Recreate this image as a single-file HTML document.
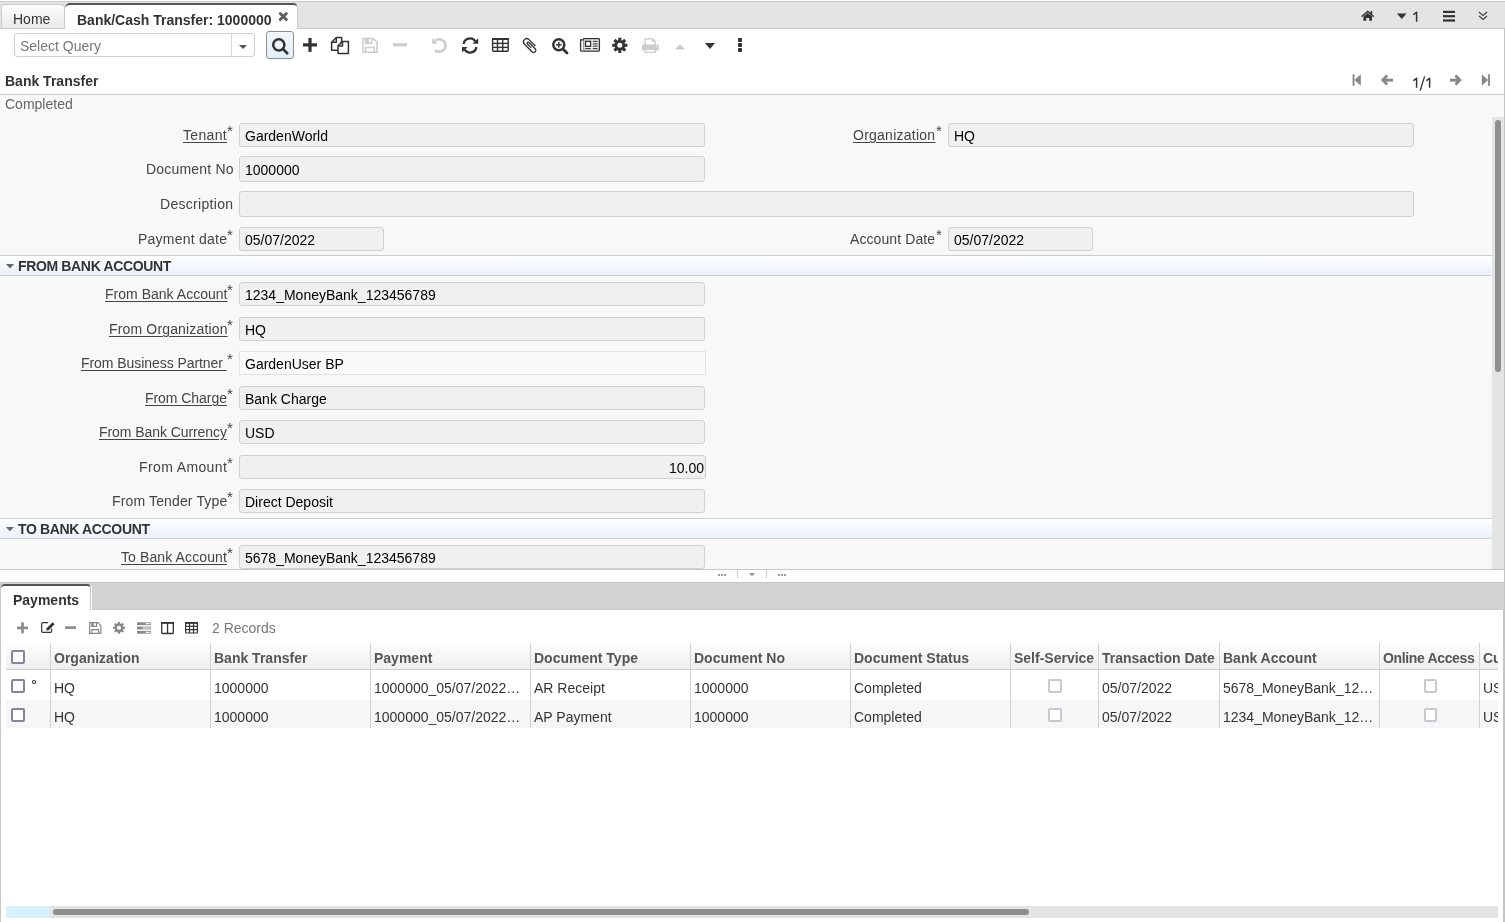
<!DOCTYPE html>
<html><head><meta charset="utf-8">
<style>
*{box-sizing:border-box;}
html,body{margin:0;padding:0;}
body{width:1505px;height:922px;overflow:hidden;position:relative;background:#fff;font-family:"Liberation Sans",sans-serif;font-size:14px;color:#333;}
.a{position:absolute;}
svg{position:absolute;overflow:visible;}
.t{position:absolute;white-space:nowrap;line-height:1;will-change:transform;}
/* tab bar */
#tabbar{left:0;top:1px;width:1505px;height:28px;background:#e4e4e4;border-top:1px solid #ccc;border-bottom:1px solid #ccc;}
#homeTab{left:1px;top:4px;width:64px;height:24px;border:1px solid #ccc;border-bottom:none;border-radius:4px 4px 0 0;background:linear-gradient(#fdfdfd,#eaeaea);}
#actTab{left:65px;top:3px;width:233px;height:26px;background:#fff;border-top:2px solid #555;border-right:1px solid #d0d0d0;border-radius:5px 5px 0 0;}
/* combobox */
#query{left:14px;top:33px;width:241px;height:24px;border:1px solid #cfcfcf;border-radius:3px;background:#fff;}
#query .div{left:216px;top:0;width:1px;height:22px;background:#d8d8d8;}
#searchBtn{left:266px;top:31px;width:28px;height:28px;border:1px solid #8b9196;border-radius:3px;background:linear-gradient(#f2f8fc,#e2eef7);}
.field{position:absolute;height:24px;border:1px solid #d0d0d0;border-radius:3px;background:#f0f0f0;}
.field span{position:absolute;left:6px;top:5px;font-size:14px;color:#000;line-height:1;white-space:nowrap;}
.lbl{position:absolute;text-align:right;font-size:14px;color:#444;line-height:1;white-space:nowrap;}
.t u{text-decoration:underline;text-underline-offset:2.3px;}
.ast{position:absolute;font-size:12px;color:#444;line-height:1;}
.bp{background:#fafafa;border-color:#e2e2e2;border-radius:0;}
.sect{position:absolute;left:0;width:1492px;height:21px;border-top:1px solid #cdcdcd;border-bottom:1px solid #cdcdcd;background:linear-gradient(#ffffff,#e9f1fb);}
</style></head>
<body>
<!-- TAB BAR -->
<div id="tabbar" class="a"></div>
<div id="homeTab" class="a"></div>
<div class="t" style="left:13px;top:12px;font-size:14px;color:#333;">Home</div>
<div id="actTab" class="a"></div>
<div class="t" style="left:77px;top:12.5px;font-size:14px;font-weight:bold;color:#333;">Bank/Cash Transfer: 1000000</div>


<!-- close x -->
<svg class="a" style="left:0;top:0" width="1505" height="922">
  <g stroke="#606060" stroke-width="3" stroke-linecap="round">
    <line x1="280.3" y1="13.5" x2="286.3" y2="19.5"/><line x1="286.3" y1="13.5" x2="280.3" y2="19.5"/>
  </g>
</svg>
<!-- right tabbar icons -->
<svg class="a" style="left:0;top:0" width="1505" height="922">
  <!-- home -->
  <path d="M1363.4,20.8 V16.5 L1367.7,12.9 L1372,16.5 V20.8 H1369.2 V18.1 H1366.3 V20.8 Z" fill="#333"/>
  <path d="M1362.1,16.3 L1367.7,11.5 L1373.4,16.3" stroke="#333" stroke-width="1.5" fill="none" stroke-linecap="round"/>
  <rect x="1370.5" y="11" width="1.7" height="3.4" fill="#333"/>
  <!-- dropdown triangle -->
  <path d="M1396.9,13.4 L1406.6,13.4 L1401.75,19 Z" fill="#333"/>
  <!-- hamburger -->
  <rect x="1443" y="10.8" width="12" height="2.2" fill="#333"/>
  <rect x="1443" y="15.1" width="12" height="2.2" fill="#333"/>
  <rect x="1443" y="19.4" width="12" height="2.2" fill="#333"/>
  <!-- double chevron -->
  <path d="M1479,12 L1483,15.6 L1487,12 M1479,15.8 L1483,19.4 L1487,15.8" stroke="#333" stroke-width="1.1" fill="none"/>
</svg>
<svg class="a" style="left:0;top:0" width="1505" height="922"><path d="M1413.3,14.6 Q1415.6,13.6 1416.6,12.3 V21.8" stroke="#333" stroke-width="1.5" fill="none" stroke-linejoin="round"/></svg>


<!-- TOOLBAR -->
<div id="query" class="a"><div class="a div"></div></div>
<div class="t" style="left:20px;top:38.5px;font-size:14px;color:#777;">Select Query</div>
<div id="searchBtn" class="a"></div>
<svg class="a" style="left:0;top:0" width="1505" height="922">
  <!-- combo arrow -->
  <path d="M239,45 L247,45 L243,49 Z" fill="#555"/>
  <!-- search -->
  <circle cx="278.8" cy="44.8" r="5.6" stroke="#333" stroke-width="2.5" fill="none"/>
  <line x1="283" y1="49" x2="287.2" y2="53.2" stroke="#333" stroke-width="2.7" stroke-linecap="round"/>
  <!-- plus -->
  <rect x="303" y="43.3" width="14" height="3.2" fill="#333"/>
  <rect x="308.4" y="37.9" width="3.2" height="14" fill="#333"/>
  <!-- copy -->
  <g stroke="#333" stroke-width="1.5" fill="#fff" stroke-linejoin="round">
    <path d="M331.6,42.2 L336.3,37.4 H341.6 V50.3 H331.6 Z"/>
    <path d="M331.6,42.2 H336.3 V37.4" fill="none"/>
    <path d="M338,45.9 L342.5,41.4 H348.4 V53.4 H338 Z"/>
    <path d="M338,45.9 H342.5 V41.4" fill="none"/>
  </g>
  <!-- save disabled -->
  <g stroke="#ccc" stroke-width="1.5" fill="none">
    <path d="M363,38.6 H373.4 L377.1,42.4 V52.2 H363 Z"/>
    <path d="M365.6,52.2 V47.5 H374.3 V52.2"/>
    <path d="M365.6,38.6 V43.3 H371.7 V38.6"/>
  </g>
  <rect x="365.6" y="38.6" width="3.4" height="4.7" fill="#ccc"/>
  <!-- minus disabled -->
  <rect x="393" y="43.2" width="14" height="3.4" rx="0.5" fill="#ccc"/>
  <!-- undo disabled -->
  <path d="M435,50.2 A6.3,6.3 0 1 0 435.2,40.6" stroke="#ccc" stroke-width="2.6" fill="none"/>
  <path d="M432.2,38.2 L432.2,43.8 L437.8,43.8 Z" fill="#ccc"/>
  <!-- refresh -->
  <g stroke="#333" stroke-width="2.3" fill="none">
    <path d="M463.6,44 A6.4,6.4 0 0 1 475.3,41.4"/>
    <path d="M476.4,47 A6.4,6.4 0 0 1 464.7,49.6"/>
  </g>
  <path d="M478.2,38.2 L478.2,43.7 L472.6,43.7 Z" fill="#333"/>
  <path d="M462,52.6 L462,47 L467.6,47 Z" fill="#333"/>
  <!-- table -->
  <g fill="none" stroke="#333" stroke-width="1.4">
    <rect x="492.6" y="38.7" width="15.6" height="12.5" rx="1"/>
    <line x1="497.5" y1="39" x2="497.5" y2="51"/>
    <line x1="502.7" y1="39" x2="502.7" y2="51"/>
    <line x1="493" y1="43.4" x2="508" y2="43.4"/>
    <line x1="493" y1="47.4" x2="508" y2="47.4"/>
  </g>
  <rect x="492" y="38" width="16.8" height="2" fill="#333"/>
  <!-- paperclip -->
  <g transform="translate(530.4,45.6) rotate(45)">
    <path d="M3.8,-3.2 H-5.2 A3.2,3.2 0 0 0 -5.2,3.2 H5.6 A2.2,2.2 0 0 0 5.6,-1.2 H-3.2 A1.1,1.1 0 0 0 -3.2,1 H2.2" stroke="#333" stroke-width="1.3" fill="none"/>
  </g>
  <!-- zoom in -->
  <circle cx="558.8" cy="44.8" r="5.5" stroke="#333" stroke-width="2.5" fill="none"/>
  <line x1="563.2" y1="49.2" x2="567" y2="53" stroke="#333" stroke-width="2.8" stroke-linecap="round"/>
  <rect x="556" y="44.1" width="5.6" height="1.5" fill="#333"/>
  <rect x="558.05" y="42.1" width="1.5" height="5.5" fill="#333"/>
  <!-- newspaper -->
  <rect x="583.5" y="38.6" width="15.9" height="12.5" rx="0.8" fill="#eee" stroke="#333" stroke-width="1.3"/>
  <path d="M583.5,39.8 H580.6 V50.4 Q580.6,51.1 581.6,51.1 H583.5" fill="#fff" stroke="#333" stroke-width="1.3"/>
  <rect x="585.6" y="41.3" width="5" height="5" fill="#fff" stroke="#333" stroke-width="1.3"/>
  <g stroke="#333" stroke-width="1.1">
    <line x1="592.8" y1="41.4" x2="597.6" y2="41.4"/>
    <line x1="592.8" y1="43.9" x2="597.6" y2="43.9"/>
    <line x1="592.8" y1="46.2" x2="597.6" y2="46.2"/>
    <line x1="585.2" y1="48.6" x2="590.9" y2="48.6"/>
    <line x1="592.8" y1="48.6" x2="597.6" y2="48.6"/>
  </g>
  <!-- gear -->
  <g transform="translate(619.8,45.3)" fill="#333">
    <g id="teeth">
      <rect x="-1.5" y="-7.6" width="3" height="15.2"/>
      <rect x="-1.5" y="-7.6" width="3" height="15.2" transform="rotate(45)"/>
      <rect x="-1.5" y="-7.6" width="3" height="15.2" transform="rotate(90)"/>
      <rect x="-1.5" y="-7.6" width="3" height="15.2" transform="rotate(135)"/>
    </g>
    <circle r="5.4"/>
    <circle r="2.5" fill="#fff"/>
  </g>
  <!-- print disabled -->
  <path d="M645.1,45.6 V38.8 H652.6 L655.2,41.4 V45.6" stroke="#ccc" stroke-width="1.3" fill="none"/>
  <path d="M652.2,38.2 V41.8 H655.8 Z" fill="#ccc"/>
  <path d="M643.3,44.6 H657.5 Q658.8,44.6 658.8,45.9 V50.6 H641.9 V45.9 Q641.9,44.6 643.3,44.6 Z" fill="#ccc"/>
  <rect x="645.1" y="49.2" width="10.1" height="3.1" fill="#fff" stroke="#ccc" stroke-width="1.3"/>
  <circle cx="656.5" cy="46.4" r="0.75" fill="#fff"/>
  <!-- up disabled -->
  <path d="M675,49.6 L685,49.6 L680,44 Z" fill="#ccc"/>
  <!-- down -->
  <path d="M704.9,43 L715,43 L710,49 Z" fill="#333"/>
  <!-- dots -->
  <rect x="738" y="38" width="4" height="4" rx="0.8" fill="#333"/>
  <rect x="738" y="43" width="4" height="4" rx="0.8" fill="#333"/>
  <rect x="738" y="48" width="4" height="4" rx="0.8" fill="#333"/>
</svg>

<div class="t" style="left:4.5px;top:73.73px;font-size:14px;color:#333;font-weight:bold;">Bank Transfer</div>
<svg class="a" style="left:0;top:0" width="1505" height="922">
 <g fill="#888">
  <rect x="1352.6" y="74.3" width="1.9" height="11.5"/>
  <path d="M1354.5,80 L1360.8,74.3 V85.8 Z"/>
  <g stroke="#888" stroke-width="2.8" fill="none" stroke-linejoin="miter"><path d="M1387.2,75.6 L1382.8,80.1 L1387.2,84.6"/><path d="M1455.5,75.6 L1459.9,80.1 L1455.5,84.6"/></g>
  <rect x="1383" y="78.7" width="10" height="2.9"/>
  <rect x="1450" y="78.7" width="10" height="2.9"/>
  <rect x="1488.1" y="74.3" width="1.9" height="11.5"/>
  <path d="M1488.1,80 L1481.8,74.3 V85.8 Z"/>
 </g>
 <rect x="0" y="94" width="1505" height="1" fill="#cdcdcd"/>
</svg><svg class="a" style="left:0;top:0" width="1505" height="922"><g stroke="#333" stroke-width="1.5" fill="none" stroke-linejoin="round"><path d="M1413.3,80.6 Q1415.6,79.6 1416.6,78.3 V87.8"/><path d="M1426.3,80.6 Q1428.6,79.6 1429.6,78.3 V87.8"/><path d="M1424.6,76.4 L1420.2,90.6" stroke-width="1.3"/></g></svg>

<!-- FORM -->
<div class="a" style="left:0;top:95px;width:1504px;height:474px;background:#f8f8f8;"></div>
<div class="t" style="left:5px;top:96.73px;font-size:14px;color:#666;font-weight:normal;">Completed</div>
<div class="t" style="right:1277.67px;top:128.13px;font-size:14px;color:#444;font-weight:normal;letter-spacing:0.33px;"><u>Tenant</u></div>
<div class="t" style="left:227.3px;top:123.30px;font-size:15px;color:#444;">*</div>
<div class="field " style="left:239px;top:123px;width:466px;height:24px;"></div>
<div class="t" style="left:244.5px;top:129.03px;font-size:14px;color:#000;font-weight:normal;">GardenWorld</div>
<div class="t" style="right:569.25px;top:128.13px;font-size:14px;color:#444;font-weight:normal;letter-spacing:0.25px;"><u>Organization</u></div>
<div class="t" style="left:935.8px;top:123.30px;font-size:15px;color:#444;">*</div>
<div class="field " style="left:948px;top:123px;width:466px;height:24px;"></div>
<div class="t" style="left:953.5px;top:129.03px;font-size:14px;color:#000;font-weight:normal;">HQ</div>
<div class="t" style="right:1271.81px;top:161.73px;font-size:14px;color:#444;font-weight:normal;letter-spacing:0.19px;">Document No</div>
<div class="field " style="left:239px;top:156px;width:466px;height:26px;"></div>
<div class="t" style="left:244.5px;top:163.03px;font-size:14px;color:#000;font-weight:normal;">1000000</div>
<div class="t" style="right:1271.7px;top:196.73px;font-size:14px;color:#444;font-weight:normal;letter-spacing:0.3px;">Description</div>
<div class="field " style="left:239px;top:191px;width:1175px;height:26px;"></div>
<div class="t" style="right:1277.77px;top:231.63px;font-size:14px;color:#444;font-weight:normal;letter-spacing:0.23px;">Payment date</div>
<div class="t" style="left:227.3px;top:226.80px;font-size:15px;color:#444;">*</div>
<div class="field " style="left:239px;top:227px;width:145px;height:24px;"></div>
<div class="t" style="left:244.5px;top:233.03px;font-size:14px;color:#000;font-weight:normal;">05/07/2022</div>
<div class="t" style="right:569.41px;top:231.63px;font-size:14px;color:#444;font-weight:normal;letter-spacing:0.09px;">Account Date</div>
<div class="t" style="left:935.8px;top:226.80px;font-size:15px;color:#444;">*</div>
<div class="field " style="left:948px;top:227px;width:145px;height:24px;"></div>
<div class="t" style="left:953.5px;top:233.03px;font-size:14px;color:#000;font-weight:normal;">05/07/2022</div>
<div class="sect" style="top:255px;height:21px;"></div>
<div class="sect" style="top:518px;height:21px;"></div>
<svg class="a" style="left:0;top:0" width="1505" height="922"><path d="M6,264 L14,264 L10,268.6 Z" fill="#666"/><path d="M5.8,527 L14,527 L9.9,531.3 Z" fill="#666"/></svg>
<div class="t" style="left:18.3px;top:259.13px;font-size:14px;color:#333;font-weight:bold;letter-spacing:-0.35px;">FROM BANK ACCOUNT</div>
<div class="t" style="left:18px;top:521.73px;font-size:14px;color:#333;font-weight:bold;letter-spacing:-0.35px;">TO BANK ACCOUNT</div>
<div class="t" style="right:1277.98px;top:287.13px;font-size:14px;color:#444;font-weight:normal;letter-spacing:0.02px;"><u>From Bank Account</u></div>
<div class="t" style="left:227.3px;top:282.30px;font-size:15px;color:#444;">*</div>
<div class="field " style="left:239px;top:282px;width:466px;height:24px;"></div>
<div class="t" style="left:244.5px;top:288.03px;font-size:14px;color:#000;font-weight:normal;">1234_MoneyBank_123456789</div>
<div class="t" style="right:1277.84px;top:322.13px;font-size:14px;color:#444;font-weight:normal;letter-spacing:0.16px;"><u>From Organization</u></div>
<div class="t" style="left:227.3px;top:317.30px;font-size:15px;color:#444;">*</div>
<div class="field " style="left:239px;top:317px;width:466px;height:24px;"></div>
<div class="t" style="left:244.5px;top:323.03px;font-size:14px;color:#000;font-weight:normal;">HQ</div>
<div class="t" style="right:1278.06px;top:356.13px;font-size:14px;color:#444;font-weight:normal;letter-spacing:-0.06px;"><u>From Business Partner&nbsp;</u></div>
<div class="t" style="left:227.3px;top:351.30px;font-size:15px;color:#444;">*</div>
<div class="field bp" style="left:239px;top:351px;width:467px;height:24px;"></div>
<div class="t" style="left:244.5px;top:357.03px;font-size:14px;color:#000;font-weight:normal;">GardenUser BP</div>
<div class="t" style="right:1278.05px;top:391.13px;font-size:14px;color:#444;font-weight:normal;letter-spacing:-0.05px;"><u>From Charge</u></div>
<div class="t" style="left:227.3px;top:386.30px;font-size:15px;color:#444;">*</div>
<div class="field " style="left:239px;top:386px;width:466px;height:24px;"></div>
<div class="t" style="left:244.5px;top:392.03px;font-size:14px;color:#000;font-weight:normal;">Bank Charge</div>
<div class="t" style="right:1278.07px;top:425.13px;font-size:14px;color:#444;font-weight:normal;letter-spacing:-0.07px;"><u>From Bank Currency</u></div>
<div class="t" style="left:227.3px;top:420.30px;font-size:15px;color:#444;">*</div>
<div class="field " style="left:239px;top:420px;width:466px;height:24px;"></div>
<div class="t" style="left:244.5px;top:426.03px;font-size:14px;color:#000;font-weight:normal;">USD</div>
<div class="t" style="right:1277.62px;top:460.13px;font-size:14px;color:#444;font-weight:normal;letter-spacing:0.38px;">From Amount</div>
<div class="t" style="left:227.3px;top:455.30px;font-size:15px;color:#444;">*</div>
<div class="field " style="left:239px;top:455px;width:467px;height:24px;"></div>
<div class="t" style="right:800.5px;top:461.03px;font-size:14px;color:#000;font-weight:normal;">10.00</div>
<div class="t" style="right:1277.8600000000001px;top:494.13px;font-size:14px;color:#444;font-weight:normal;letter-spacing:0.14px;">From Tender Type</div>
<div class="t" style="left:227.3px;top:489.30px;font-size:15px;color:#444;">*</div>
<div class="field " style="left:239px;top:489px;width:466px;height:24px;"></div>
<div class="t" style="left:244.5px;top:495.03px;font-size:14px;color:#000;font-weight:normal;">Direct Deposit</div>
<div class="t" style="right:1277.8899999999999px;top:550.13px;font-size:14px;color:#444;font-weight:normal;letter-spacing:0.11px;"><u>To Bank Account</u></div>
<div class="t" style="left:227.3px;top:545.30px;font-size:15px;color:#444;">*</div>
<div class="field " style="left:239px;top:545px;width:466px;height:24px;"></div>
<div class="t" style="left:244.5px;top:551.03px;font-size:14px;color:#000;font-weight:normal;">5678_MoneyBank_123456789</div>
<div class="a" style="left:1492px;top:117px;width:12px;height:452px;background:#e4e4e4;"></div>
<div class="a" style="left:1495px;top:120px;width:6px;height:252px;border-radius:3px;background:#8e8e8e;"></div>
<div class="a" style="left:0;top:569px;width:1504px;height:14px;background:#fff;border-top:1px solid #c6c6c6;border-bottom:1px solid #c6c6c6;"></div>
<svg class="a" style="left:0;top:0" width="1505" height="922">
 <g fill="#999">
  <rect x="718" y="574" width="2" height="2"/><rect x="721" y="574" width="2" height="2"/><rect x="724" y="574" width="2" height="2"/>
  <rect x="778" y="574" width="2" height="2"/><rect x="781" y="574" width="2" height="2"/><rect x="784" y="574" width="2" height="2"/>
  <path d="M749,573 L755,573 L752,576.5 Z"/>
 </g>
 <rect x="737" y="570" width="1" height="8" fill="#c6c6c6"/>
 <rect x="766" y="570" width="1" height="8" fill="#c6c6c6"/>
</svg>
<div class="a" style="left:0;top:583px;width:1504px;height:27px;background:#d3d3d3;"></div>
<div class="a" style="left:0;top:583px;width:1px;height:339px;background:#c8c8c8;"></div>
<div class="a" style="left:1px;top:584px;width:90px;height:26px;background:#fff;border-top:2px solid #555;border-right:1px solid #c8c8c8;border-radius:4px 4px 0 0;"></div>
<div class="a" style="left:91px;top:586px;width:1px;height:24px;background:#fff;"></div>
<div class="t" style="left:12.8px;top:592.83px;font-size:14px;color:#333;font-weight:bold;">Payments</div>
<svg class="a" style="left:0;top:0" width="1505" height="922">
 <!-- plus -->
 <rect x="17" y="626.6" width="11" height="2.6" fill="#888"/>
 <rect x="21.2" y="622.3" width="2.6" height="11" fill="#888"/>
 <!-- edit -->
 <path d="M48.2,622.6 H42.8 Q41.7,622.6 41.7,623.7 V631.2 Q41.7,632.3 42.8,632.3 H50.4 Q51.5,632.3 51.5,631.2 V628.6" stroke="#333" stroke-width="1.2" fill="none"/>
 <path d="M46.2,630.6 L46.6,628.2 L52.6,622.2 L54.6,624.2 L48.6,630.2 Z" fill="#333"/>
 <!-- minus -->
 <rect x="65" y="626.3" width="11" height="2.6" fill="#888"/>
 <!-- save -->
 <g stroke="#888" stroke-width="1.2" fill="none">
  <path d="M89.6,622.6 H98 L100.8,625.4 V633.4 H89.6 Z"/>
  <path d="M91.8,633.4 V629.6 H98.6 V633.4"/>
  <path d="M91.8,622.6 V626.4 H96.6 V622.6"/>
 </g>
 <rect x="91.8" y="622.6" width="2" height="3.8" fill="#888"/>
 <!-- gear -->
 <g transform="translate(119,627.8)" fill="#888">
  <rect x="-1.2" y="-5.9" width="2.4" height="11.8"/>
  <rect x="-1.2" y="-5.9" width="2.4" height="11.8" transform="rotate(45)"/>
  <rect x="-1.2" y="-5.9" width="2.4" height="11.8" transform="rotate(90)"/>
  <rect x="-1.2" y="-5.9" width="2.4" height="11.8" transform="rotate(135)"/>
  <circle r="4.3"/>
  <circle r="2" fill="#fff"/>
 </g>
 <!-- list -->
 <g fill="#888">
  <rect x="137" y="622.3" width="14" height="2.8"/>
  <rect x="137" y="626.6" width="14" height="2.8"/>
  <rect x="137" y="630.9" width="14" height="2.8"/>
 </g>
 <g fill="#fff">
  <rect x="145.5" y="623.2" width="5" height="1"/>
  <rect x="142.5" y="627.5" width="8" height="1"/>
  <rect x="145.5" y="631.8" width="5" height="1"/>
 </g>
 <!-- columns -->
 <rect x="161.7" y="622.7" width="11.6" height="10.8" rx="0.8" stroke="#333" stroke-width="1.3" fill="none"/>
 <rect x="161" y="622" width="13" height="1.8" fill="#333"/>
 <rect x="166.9" y="622.5" width="1.3" height="11" fill="#333"/>
 <!-- table -->
 <g fill="none" stroke="#333" stroke-width="1.2">
  <rect x="185.6" y="622.6" width="11.8" height="10.4" rx="0.8"/>
  <line x1="189.5" y1="623" x2="189.5" y2="633"/>
  <line x1="193.5" y1="623" x2="193.5" y2="633"/>
  <line x1="186" y1="626.3" x2="197" y2="626.3"/>
  <line x1="186" y1="629.6" x2="197" y2="629.6"/>
 </g>
 <rect x="185" y="622" width="13" height="1.8" fill="#333"/>
</svg>
<div class="t" style="left:212.4px;top:621.13px;font-size:14px;color:#777;font-weight:normal;">2 Records</div>
<div class="a" style="left:6px;top:643px;width:1492px;height:27px;background:linear-gradient(#fdfdfd,#efefef);border-bottom:1px solid #cfcfcf;"></div>
<div class="a" style="left:6px;top:700px;width:1492px;height:28px;background:#f6f6f6;"></div>
<div class="a" style="left:50px;top:643px;width:1px;height:85px;background:#d2d2d2;"></div>
<div class="a" style="left:210px;top:643px;width:1px;height:85px;background:#d2d2d2;"></div>
<div class="a" style="left:370px;top:643px;width:1px;height:85px;background:#d2d2d2;"></div>
<div class="a" style="left:530px;top:643px;width:1px;height:85px;background:#d2d2d2;"></div>
<div class="a" style="left:690px;top:643px;width:1px;height:85px;background:#d2d2d2;"></div>
<div class="a" style="left:850px;top:643px;width:1px;height:85px;background:#d2d2d2;"></div>
<div class="a" style="left:1010px;top:643px;width:1px;height:85px;background:#d2d2d2;"></div>
<div class="a" style="left:1098px;top:643px;width:1px;height:85px;background:#d2d2d2;"></div>
<div class="a" style="left:1219px;top:643px;width:1px;height:85px;background:#d2d2d2;"></div>
<div class="a" style="left:1379px;top:643px;width:1px;height:85px;background:#d2d2d2;"></div>
<div class="a" style="left:1479px;top:643px;width:1px;height:85px;background:#d2d2d2;"></div>
<div class="t" style="left:54px;top:650.73px;font-size:14px;color:#555;font-weight:bold;">Organization</div>
<div class="t" style="left:214px;top:650.73px;font-size:14px;color:#555;font-weight:bold;">Bank Transfer</div>
<div class="t" style="left:374px;top:650.73px;font-size:14px;color:#555;font-weight:bold;">Payment</div>
<div class="t" style="left:534px;top:650.73px;font-size:14px;color:#555;font-weight:bold;">Document Type</div>
<div class="t" style="left:694px;top:650.73px;font-size:14px;color:#555;font-weight:bold;">Document No</div>
<div class="t" style="left:854px;top:650.73px;font-size:14px;color:#555;font-weight:bold;">Document Status</div>
<div class="t" style="left:1014px;top:650.73px;font-size:14px;color:#555;font-weight:bold;">Self-Service</div>
<div class="t" style="left:1102px;top:650.73px;font-size:14px;color:#555;font-weight:bold;">Transaction Date</div>
<div class="t" style="left:1223px;top:650.73px;font-size:14px;color:#555;font-weight:bold;">Bank Account</div>
<div class="t" style="left:1383px;top:650.73px;font-size:14px;color:#555;font-weight:bold;letter-spacing:-0.35px;">Online Access</div>
<div class="t" style="left:1483px;top:650.73px;font-size:14px;color:#555;font-weight:bold;">Cu</div>
<div class="t" style="left:54px;top:680.63px;font-size:14px;color:#333;font-weight:normal;">HQ</div>
<div class="t" style="left:214px;top:680.63px;font-size:14px;color:#333;font-weight:normal;">1000000</div>
<div class="t" style="left:374px;top:680.63px;font-size:14px;color:#333;font-weight:normal;">1000000_05/07/2022…</div>
<div class="t" style="left:534px;top:680.63px;font-size:14px;color:#333;font-weight:normal;">AR Receipt</div>
<div class="t" style="left:694px;top:680.63px;font-size:14px;color:#333;font-weight:normal;">1000000</div>
<div class="t" style="left:854px;top:680.63px;font-size:14px;color:#333;font-weight:normal;">Completed</div>
<div class="t" style="left:1102px;top:680.63px;font-size:14px;color:#333;font-weight:normal;">05/07/2022</div>
<div class="t" style="left:1223px;top:680.63px;font-size:14px;color:#333;font-weight:normal;">5678_MoneyBank_12…</div>
<div class="t" style="left:1483px;top:680.63px;font-size:14px;color:#333;font-weight:normal;">US</div>
<div class="t" style="left:54px;top:709.63px;font-size:14px;color:#333;font-weight:normal;">HQ</div>
<div class="t" style="left:214px;top:709.63px;font-size:14px;color:#333;font-weight:normal;">1000000</div>
<div class="t" style="left:374px;top:709.63px;font-size:14px;color:#333;font-weight:normal;">1000000_05/07/2022…</div>
<div class="t" style="left:534px;top:709.63px;font-size:14px;color:#333;font-weight:normal;">AP Payment</div>
<div class="t" style="left:694px;top:709.63px;font-size:14px;color:#333;font-weight:normal;">1000000</div>
<div class="t" style="left:854px;top:709.63px;font-size:14px;color:#333;font-weight:normal;">Completed</div>
<div class="t" style="left:1102px;top:709.63px;font-size:14px;color:#333;font-weight:normal;">05/07/2022</div>
<div class="t" style="left:1223px;top:709.63px;font-size:14px;color:#333;font-weight:normal;">1234_MoneyBank_12…</div>
<div class="t" style="left:1483px;top:709.63px;font-size:14px;color:#333;font-weight:normal;">US</div>
<div class="a" style="left:1498px;top:643px;width:5px;height:90px;background:#fff;"></div>
<div class="a" style="left:11.1px;top:650.3px;width:13.6px;height:13.6px;border:2px solid #84849a;border-radius:2px;background:#fff;"></div>
<div class="a" style="left:11.1px;top:679.2px;width:13.6px;height:13.6px;border:2px solid #84849a;border-radius:2px;background:#fff;"></div>
<div class="a" style="left:11.1px;top:708.2px;width:13.6px;height:13.6px;border:2px solid #84849a;border-radius:2px;background:#fff;"></div>
<div class="a" style="left:32.3px;top:680.3px;width:3.8px;height:3.6px;border:1.2px solid #333;border-radius:50%;"></div>
<div class="a" style="left:1048.1px;top:679.1px;width:13.6px;height:13.6px;border:2px solid #c8c8d0;border-radius:2px;background:#fff;"></div>
<div class="a" style="left:1048.1px;top:708px;width:13.6px;height:13.6px;border:2px solid #c8c8d0;border-radius:2px;background:#fff;"></div>
<div class="a" style="left:1423.5px;top:679.1px;width:13.6px;height:13.6px;border:2px solid #c8c8d0;border-radius:2px;background:#fff;"></div>
<div class="a" style="left:1423.5px;top:708px;width:13.6px;height:13.6px;border:2px solid #c8c8d0;border-radius:2px;background:#fff;"></div>
<div class="a" style="left:6px;top:906px;width:1492px;height:12px;background:#e4e4e4;"></div>
<div class="a" style="left:6px;top:906px;width:44px;height:12px;background:#d8f1fc;"></div>
<div class="a" style="left:53px;top:909px;width:976px;height:6px;border-radius:3px;background:#8e8e8e;"></div>
<div class="a" style="left:1504px;top:28px;width:1px;height:894px;background:#c4c4c4;"></div>
<div class="a" style="left:1503px;top:610px;width:1px;height:312px;background:#c4c4c4;"></div>
<div class="a" style="left:92px;top:609px;width:1412px;height:1px;background:#cbcbcb;"></div>

</body></html>
